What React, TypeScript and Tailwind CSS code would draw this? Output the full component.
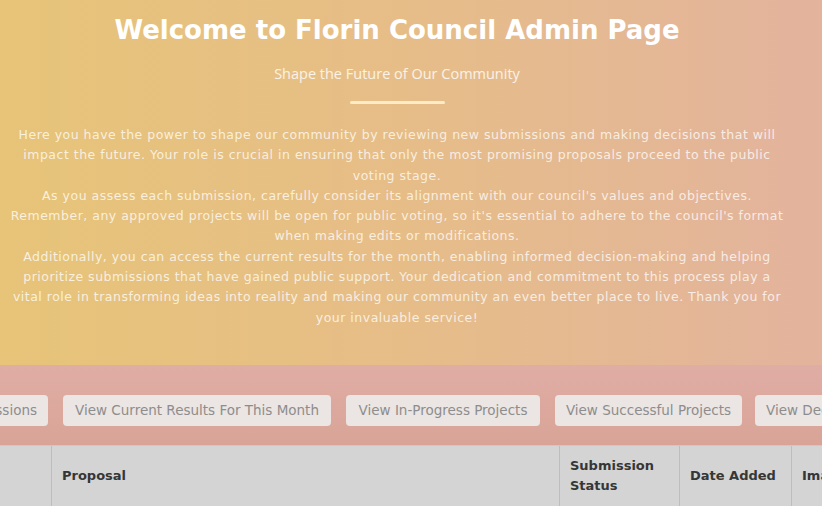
import React from "react";

const lines: string[][] = [
  [
    "Here you have the power to shape our community by reviewing new submissions and making decisions that will",
    "impact the future. Your role is crucial in ensuring that only the most promising proposals proceed to the public",
    "voting stage.",
  ],
  [
    "As you assess each submission, carefully consider its alignment with our council's values and objectives.",
  ],
  [
    "Remember, any approved projects will be open for public voting, so it's essential to adhere to the council's format",
    "when making edits or modifications.",
  ],
  [
    "Additionally, you can access the current results for the month, enabling informed decision-making and helping",
    "prioritize submissions that have gained public support. Your dedication and commitment to this process play a",
    "vital role in transforming ideas into reality and making our community an even better place to live. Thank you for",
    "your invaluable service!",
  ],
];

export default function App() {
  return (
    <div
      className="w-[822px] h-[506px] overflow-hidden"
      style={{ fontFamily: "'DejaVu Sans', Inter, sans-serif" }}
    >
      <section className="h-[365px] bg-gradient-to-r from-[#e7c478] via-[#e6bd88] to-[#e3b39d] flex flex-col items-center pr-[28px]">
        <h1 className="mt-[13px] text-[26px] leading-[34px] font-bold text-white">
          Welcome to Florin Council Admin Page
        </h1>
        <p
          className="mt-[18px] text-[14.5px] leading-[18px] text-white/80"
          style={{ fontFamily: "'Open Sans', sans-serif" }}
        >
          Shape the Future of Our Community
        </p>
        <div className="mt-[18px] w-[95px] h-[3px] bg-[#fcebc6] rounded-full" />
        <div className="mt-[21px] text-center text-[12.5px] leading-[20.3px] tracking-[0.5px] text-white/75 whitespace-nowrap">
          {lines.map((p, i) => (
            <p key={i}>
              {p.map((l, j) => (
                <React.Fragment key={j}>
                  {l}
                  {j < p.length - 1 && <br />}
                </React.Fragment>
              ))}
            </p>
          ))}
        </div>
      </section>
      <section className="h-[80px] bg-gradient-to-b from-[#e0ada5] to-[#d9a497] pt-[30px]">
        <div className="flex gap-[15px] ml-[-132px] text-[13.5px] text-[#8d8d8d] whitespace-nowrap">
          <div className="w-[180px] h-[31px] shrink-0 rounded-[4px] bg-[#ebe5e3] flex items-center justify-end pr-[11px]">
            View New Submissions
          </div>
          <div className="w-[268px] h-[31px] shrink-0 rounded-[4px] bg-[#ebe5e3] flex items-center justify-center">
            View Current Results For This Month
          </div>
          <div className="w-[194px] h-[31px] shrink-0 rounded-[4px] bg-[#ebe5e3] flex items-center justify-center">
            View In-Progress Projects
          </div>
          <div className="w-[187px] h-[31px] shrink-0 rounded-[4px] bg-[#ebe5e3] flex items-center justify-center">
            View Successful Projects
          </div>
          <div className="w-[190px] h-[31px] shrink-0 rounded-[4px] bg-[#ebe5e3] flex items-center pl-[11px] ml-[-2px]">
            View Declined Projects
          </div>
        </div>
      </section>
      <div className="h-[61px] bg-[#d4d4d4] border-t border-[#c9c9c9] flex text-[13px] font-bold text-[#363636] whitespace-nowrap">
        <div className="w-[52px] shrink-0 border-r border-[#bdbdbd]" />
        <div className="w-[508px] shrink-0 border-r border-[#bdbdbd] flex items-center pl-[10px]">
          Proposal
        </div>
        <div className="w-[120px] shrink-0 border-r border-[#bdbdbd] flex items-center pl-[10px] leading-[20px]">
          Submission
          <br />
          Status
        </div>
        <div className="w-[112px] shrink-0 border-r border-[#bdbdbd] flex items-center pl-[10px]">
          Date Added
        </div>
        <div className="w-[100px] shrink-0 flex items-center pl-[10px]">Image</div>
      </div>
    </div>
  );
}
